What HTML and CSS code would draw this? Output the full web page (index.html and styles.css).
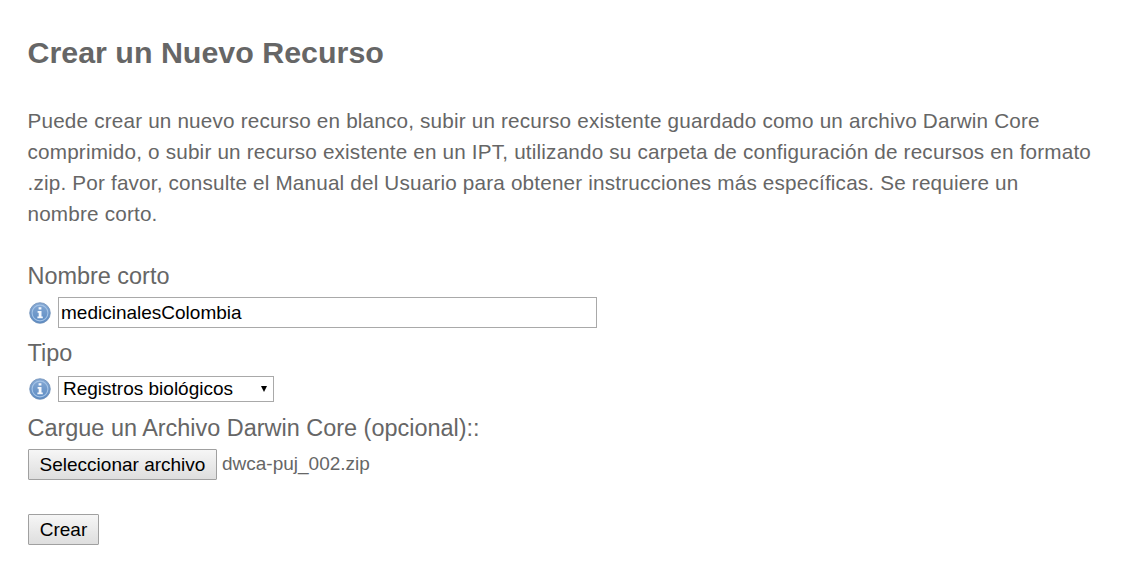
FILE: index.html
```html
<!DOCTYPE html>
<html lang="es">
<head>
<meta charset="utf-8">
<title>Crear un Nuevo Recurso</title>
<link rel="stylesheet" href="styles.css">
</head>
<body>
<svg class="defs" width="0" height="0" aria-hidden="true">
  <defs>
    <linearGradient id="disc" x1="0" y1="0" x2="0" y2="1">
      <stop offset="0" stop-color="#86a9d4"/>
      <stop offset="1" stop-color="#5b8ac2"/>
    </linearGradient>
    <symbol id="info" viewBox="0 0 22 22">
      <circle cx="11" cy="11" r="10.3" fill="url(#disc)" stroke="#6f8fb8" stroke-width=".8"/>
      <circle cx="11" cy="11" r="7.9" fill="none" stroke="#a4c3e6" stroke-width="1.1"/>
      <path d="M9.6 5.2h2.8v2.4H9.6zM8.6 8.9h3.9v5.6h1.3v1.8H8.4v-1.8h1.3v-3.8H8.6z" fill="#f4f8fd"/>
    </symbol>
  </defs>
</svg>
<main class="page">
  <h1 class="title">Crear un Nuevo Recurso</h1>
  <p class="intro">Puede crear un nuevo recurso en blanco, subir un recurso existente guardado como un archivo Darwin Core<br>comprimido, o subir un recurso existente en un IPT, utilizando su carpeta de configuración de recursos en formato<br>.zip. Por favor, consulte el Manual del Usuario para obtener instrucciones más específicas. Se requiere un<br>nombre corto.</p>
  <form class="form">
    <label class="label" for="shortname">Nombre corto</label>
    <div class="row row-name">
      <svg class="info"><use href="#info"/></svg>
      <input class="text-input" id="shortname" type="text" value="medicinalesColombia">
    </div>
    <div class="label">Tipo</div>
    <div class="row row-type">
      <svg class="info"><use href="#info"/></svg>
      <div class="select"><span>Registros biológicos</span><svg class="arrow" viewBox="0 0 6 6"><path d="M0 0h6L3 6z"/></svg></div>
    </div>
    <div class="label">Cargue un Archivo Darwin Core (opcional)::</div>
    <div class="row row-file">
      <button class="button button-file" type="button">Seleccionar archivo</button>
      <span class="filename">dwca-puj_002.zip</span>
    </div>
    <button class="button button-create" type="button">Crear</button>
  </form>
</main>
</body>
</html>
```
FILE: styles.css
```css
* { box-sizing: border-box; }
body {
  margin: 0;
  background: #fff;
  color: #666;
  font-family: "Liberation Sans", Arial, sans-serif;
}
.defs { display: block; height: 0; }
.page { padding: 34px 28px 0 27.5px; }
.title {
  margin: 0 0 35px;
  font-size: 30.4px;
  line-height: 36px;
  font-weight: bold;
}
.intro {
  margin: 0 0 32px;
  font-size: 20.7px;
  line-height: 31px;
  letter-spacing: .182px;
  white-space: nowrap;
}
.form { display: flex; flex-direction: column; align-items: flex-start; }
.label {
  display: block;
  font-size: 23.45px;
  line-height: 30px;
  height: 30px;
  white-space: nowrap;
}
.row { display: flex; align-items: center; margin-left: .5px; }
.row-name { height: 31px; margin-top: 6px; margin-bottom: 10px; }
.row-type { height: 26px; margin-top: 8px; margin-bottom: 11px; }
.row-file { height: 31px; margin-top: 6px; margin-bottom: 34px; }
.info { width: 22px; height: 22px; margin: 0 7px 0 1px; }
.text-input {
  width: 539px;
  height: 31px;
  padding: 0 2px;
  border: 1px solid #a9a9a9;
  background: #fff;
  color: #000;
  font: 19px "Liberation Sans", Arial, sans-serif;
}
.select {
  display: flex;
  align-items: center;
  justify-content: space-between;
  width: 216px;
  height: 26px;
  padding: 0 6px 0 4px;
  border: 1px solid #a9a9a9;
  color: #000;
  font-size: 19px;
  white-space: nowrap;
}
.arrow { width: 6px; height: 6px; }
.button {
  height: 31px;
  padding: 0;
  border: 1px solid #a0a0a0;
  border-radius: 1px;
  background: linear-gradient(#f6f6f6, #dedede);
  color: #000;
  font: 19px "Liberation Sans", Arial, sans-serif;
  white-space: nowrap;
}
.button-file { width: 189px; }
.button-create { width: 71px; margin-left: .5px; }
.filename { margin: 0 0 2px 5px; font-size: 19px; }
```
